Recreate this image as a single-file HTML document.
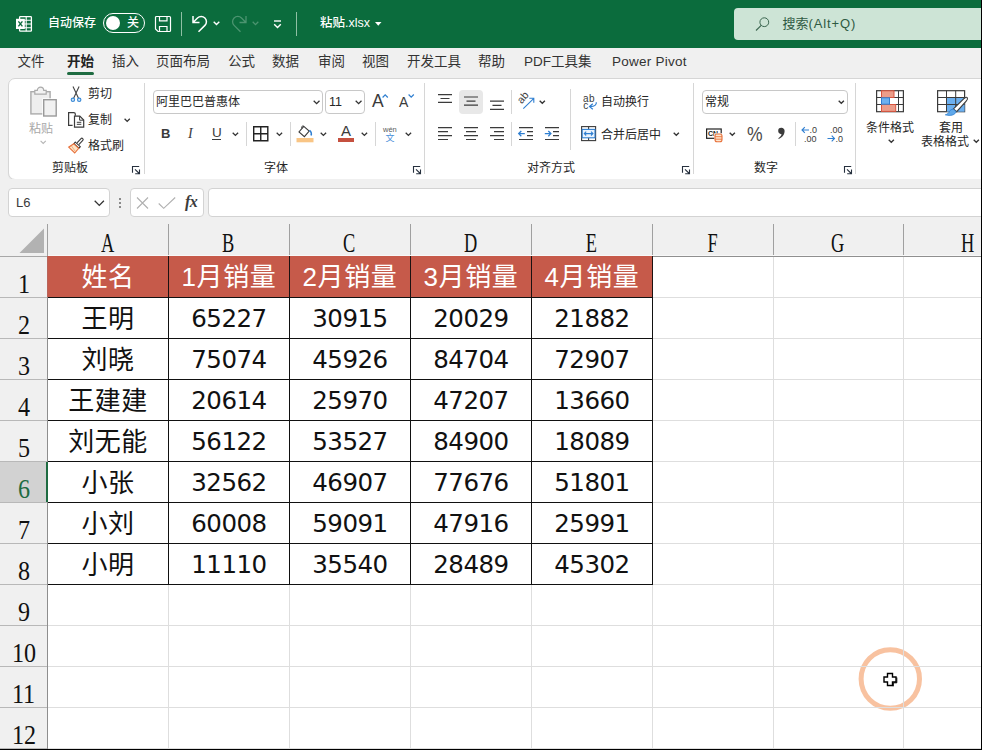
<!DOCTYPE html>
<html lang="zh-CN">
<head>
<meta charset="utf-8">
<title>粘贴.xlsx</title>
<style>
html,body{margin:0;padding:0;}
body{width:982px;height:750px;overflow:hidden;position:relative;background:#f0f0f0;font-family:"Liberation Sans","Noto Sans CJK SC",sans-serif;color:#222;}
.abs{position:absolute;}
svg{overflow:visible;}
#title{left:0;top:0;width:982px;height:48px;background:#0b6c3d;}
#title .t{position:absolute;color:#fff;font-weight:500;font-size:12px;line-height:16px;white-space:nowrap;}
#search{left:734px;top:8px;width:260px;height:32px;border-radius:4px;background:#cde4d6;}
#search .st{position:absolute;left:48.5px;top:8px;font-size:13px;line-height:16px;color:#2f5a43;white-space:nowrap;}
#menu{left:0;top:48px;width:982px;height:30px;background:#f0f0f0;}
#menu span{position:absolute;top:6px;font-size:13.5px;line-height:16px;color:#333;white-space:nowrap;}
#ribbon{left:8px;top:78px;width:990px;height:102px;background:#fff;border:1px solid #d6d6d6;border-radius:7px;box-sizing:border-box;box-shadow:0 1px 1px rgba(0,0,0,0.05);}
.rt{position:absolute;font-weight:400;font-size:12px;line-height:14px;color:#262626;white-space:nowrap;}
.sep{position:absolute;width:1px;background:#d6d6d6;}
.box{position:absolute;box-sizing:border-box;border:1px solid #c8c8c8;border-radius:4px;background:#fff;}
#fbar{left:0;top:179px;width:982px;height:44px;background:#f0f0f0;}
#grid{left:0;top:222px;width:982px;height:528px;background:#f0f0f0;overflow:hidden;}
#grid .vl{position:absolute;width:1px;background:#dedede;}
#grid .hl{position:absolute;height:1px;background:#dedede;}
#grid .hv{position:absolute;width:1px;background:#a0a0a0;}
#grid .cl{position:absolute;top:5px;height:32px;line-height:32px;text-align:center;font-family:"Liberation Serif","Noto Serif CJK SC",serif;font-size:27px;color:#111;}
#grid .cl span{display:inline-block;transform:scaleX(0.68);}
#grid .rn{position:absolute;left:0;width:47px;height:40px;line-height:54px;text-align:center;font-family:"Liberation Serif","Noto Serif CJK SC",serif;font-size:28px;color:#111;}
#grid .rn span{display:inline-block;transform:scaleX(0.86);}
#grid .rn.sel{color:#1e6b41;}
#grid .hc{position:absolute;background:#c65a4a;color:#fff;text-align:center;font-size:26px;line-height:43px;letter-spacing:0.6px;white-space:nowrap;}
#grid .dc{position:absolute;height:40px;line-height:41px;text-align:center;color:#111;white-space:nowrap;}
#grid .cj{font-size:26px;letter-spacing:0.5px;line-height:43px;}
#grid .nm{font-family:"DejaVu Sans","Liberation Sans",sans-serif;font-size:24.5px;letter-spacing:-0.5px;}
</style>
</head>
<body>
<div id="title" class="abs">
<svg class="abs" style="left:15px;top:15px" width="18" height="18" viewBox="0 0 18 18"><rect x="4.600" y="1.600" width="11.800" height="14.600" rx="0.800" fill="none" stroke="#fff" stroke-width="1.300"/><path d="M4.600 5.300h11.800M4.600 9h11.800M4.600 12.700h11.800M11.200 1.600v14.600" stroke="#fff" stroke-width="1.100" fill="none"/><rect x="1" y="3.800" width="8.800" height="10.200" fill="#fff"/><path d="M3.400 6.400l4 5M7.400 6.400l-4 5" stroke="#0b6c3d" stroke-width="1.400" fill="none"/></svg>
<div class="t" style="left:48px;top:15px;">自动保存</div>
<div class="abs" style="left:103px;top:13px;width:42px;height:20px;box-sizing:border-box;border:1px solid #fff;border-radius:10px;"></div>
<div class="abs" style="left:106px;top:16px;width:14px;height:14px;border-radius:7px;background:#fff;"></div>
<div class="t" style="left:127px;top:15px;">关</div>
<svg class="abs" style="left:154px;top:15px" width="18" height="18" viewBox="0 0 18 18"><path d="M1.500 2.500a1 1 0 0 1 1-1h13a1 1 0 0 1 1 1v13a1 1 0 0 1-1 1h-11.500l-2.500-2.500z" fill="none" stroke="#fff" stroke-width="1.200"/><path d="M5.500 1.500v4.300h7.500v-4.300M5.500 16.500v-5h7.500v5" fill="none" stroke="#fff" stroke-width="1.200"/></svg>
<div class="abs" style="left:181px;top:12px;width:1px;height:24px;background:#8fc0a4;"></div>
<svg class="abs" style="left:192px;top:14px" width="16" height="19" viewBox="0 0 16 19"><path d="M1 2v6.500h6.500M1.300 8.200l4.200-4.200a5.200 5.200 0 0 1 7.400 7.400l-6.400 6.400" fill="none" stroke="#fff" stroke-width="1.500"/></svg>
<svg class="abs" style="left:213px;top:21px" width="7" height="5" viewBox="0 0 7 5"><path d="M0.700 0.800l2.800 2.800 2.800-2.800" fill="none" stroke="#fff" stroke-width="1.400"/></svg>
<svg class="abs" style="left:231px;top:14px" width="16" height="19" viewBox="0 0 16 19"><path d="M15 2v6.500h-6.500M14.700 8.200l-4.200-4.200a5.200 5.200 0 0 0-7.400 7.400l6.400 6.400" fill="none" stroke="#4c9470" stroke-width="1.300"/></svg>
<svg class="abs" style="left:252px;top:21px" width="7" height="5" viewBox="0 0 7 5"><path d="M0.700 0.800l2.800 2.800 2.800-2.800" fill="none" stroke="#4c9470" stroke-width="1.300"/></svg>
<svg class="abs" style="left:273px;top:19px" width="9" height="10" viewBox="0 0 9 10"><path d="M1 2h7" stroke="#fff" stroke-width="1.400"/><path d="M1.200 5.200l3.300 3.300 3.300-3.300" fill="none" stroke="#fff" stroke-width="1.400"/></svg>
<div class="abs" style="left:296px;top:12px;width:1px;height:24px;background:#8fc0a4;"></div>
<div class="t" style="left:320px;top:15px;font-size:12.500px;">粘贴.xlsx</div>
<svg class="abs" style="left:375px;top:22px" width="7" height="4" viewBox="0 0 7 4"><path d="M0 0h6.500l-3.250 3.800z" fill="#fff"/></svg>
<div id="search" class="abs"><svg class="abs" style="left:21px;top:9px" width="15" height="15" viewBox="0 0 15 15"><circle cx="9.300" cy="5.200" r="4.400" fill="none" stroke="#3b6650" stroke-width="1"/><path d="M6.200 8.300l-5.200 5.200" stroke="#3b6650" stroke-width="1.100"/></svg><div class="st">搜索<span style="letter-spacing:0.900px">(Alt+Q)</span></div></div>

</div>
<div id="menu" class="abs">
<span style="left:17.500px">文件</span><span style="left:67px;font-weight:bold;color:#222">开始</span><span style="left:112px">插入</span><span style="left:156px">页面布局</span><span style="left:228px">公式</span><span style="left:272px">数据</span><span style="left:318px">审阅</span><span style="left:362px">视图</span><span style="left:407px">开发工具</span><span style="left:478px">帮助</span><span style="left:524px">PDF工具集</span><span style="left:612px;letter-spacing:0.250px">Power Pivot</span>
<div class="abs" style="left:67px;top:24px;width:27px;height:3px;border-radius:1.500px;background:#1e6b41"></div>

</div>
<div id="ribbon" class="abs">
<!-- coordinates inside ribbon are relative to (9,78) minus border; use wrapper offset -->
<div class="abs" id="rb" style="left:-9px;top:-79px;width:982px;height:190px;">
<!-- clipboard group -->
<svg class="abs" style="left:29px;top:86px" width="29" height="32" viewBox="0 0 29 32"><rect x="1.900" y="5.700" width="19.200" height="22.200" fill="#eeeeee" stroke="#ababab" stroke-width="1.400"/><path d="M5.800 8.200v-3.800h2.500a3.200 3.200 0 0 1 6.400 0h2.500v3.800z" fill="#f2f2f2" stroke="#ababab" stroke-width="1.200"/><rect x="13.300" y="12.300" width="15.200" height="19" fill="#fff"/><rect x="14.700" y="13.700" width="12.500" height="16.300" fill="#f1f1f1" stroke="#9a9a9a" stroke-width="1.400"/></svg>
<div class="rt" style="left:29px;top:121.500px;color:#a8a8a8;font-weight:400;">粘贴</div>
<svg class="abs" style="left:40px;top:140px" width="7" height="5" viewBox="0 0 7 5"><path d="M0.600 0.800l2.600 2.600 2.600-2.600" fill="none" stroke="#b5b5b5" stroke-width="1.100"/></svg>
<svg class="abs" style="left:70px;top:86px" width="12" height="17" viewBox="0 0 12 17"><path d="M3 0.500l5.500 11.700M9.100 0.500l-5.500 11.700" stroke="#444" stroke-width="1.100" fill="none"/><circle cx="2.900" cy="13.800" r="1.700" fill="#cfe4f7" stroke="#3a8ad6" stroke-width="1.100"/><circle cx="9.200" cy="13.800" r="1.700" fill="#cfe4f7" stroke="#3a8ad6" stroke-width="1.100"/></svg>
<div class="rt" style="left:88px;top:87px;">剪切</div>
<svg class="abs" style="left:68px;top:112px" width="17" height="16" viewBox="0 0 17 16"><path d="M4.600 13.300h-4v-12.700h5.200q1.500 0 1.500 1.500v1.700" fill="none" stroke="#3b3b3b" stroke-width="1.200"/><path d="M6.500 4.100h5.300l3.900 3.900v7.200h-9.200z" fill="#fff" stroke="#3b3b3b" stroke-width="1.200"/><path d="M11.600 4.300v3.900h3.900" fill="none" stroke="#3b3b3b" stroke-width="1"/><path d="M8.800 10.300h4.500M8.800 12.300h4.500" stroke="#3b3b3b" stroke-width="1"/></svg>
<div class="rt" style="left:88px;top:113px;">复制</div>
<svg class="abs" style="left:124px;top:118px" width="7" height="5" viewBox="0 0 7 5"><path d="M0.600 0.800l2.600 2.600 2.600-2.600" fill="none" stroke="#333" stroke-width="1.300"/></svg>
<svg class="abs" style="left:68px;top:138px" width="17" height="16" viewBox="0 0 17 16"><path d="M10.800 6.600l4-4.300a1.200 1.200 0 0 0-1.800-1.700l-4 4.300" fill="#fff" stroke="#3b3b3b" stroke-width="1.100"/><path d="M7.300 4.100l5 4.600-1.400 1.500-5-4.600z" fill="#fff" stroke="#3b3b3b" stroke-width="1.100"/><path d="M5.800 5.800l4.900 4.500-4 4.700-6-5.800z" fill="#fde6c8" stroke="#e8703a" stroke-width="1.100"/><path d="M3.500 8l3.500 5" stroke="#f0a070" stroke-width="0.800" fill="none"/></svg>
<div class="rt" style="left:88px;top:139px;">格式刷</div>
<div class="rt" style="left:52px;top:161px;">剪贴板</div>
<svg class="abs lau" style="left:132px;top:166px" width="9" height="9" viewBox="0 0 9 9"><path d="M0.500 6.800v-6.300h6.700" fill="none" stroke="#26303e" stroke-width="1.100"/><path d="M3 3.400l4.300 4.100M7.500 3.400v4.300h-4.300" fill="none" stroke="#26303e" stroke-width="1.100"/></svg>
<div class="sep" style="left:144px;top:83px;height:91px;"></div>
<!-- font group -->
<div class="box" style="left:153px;top:90px;width:170px;height:24px;"></div>
<div class="rt" style="left:156px;top:95px;">阿里巴巴普惠体</div>
<svg class="abs" style="left:313px;top:100px" width="8" height="5" viewBox="0 0 8 5"><path d="M0.700 0.700l2.900 2.900 2.900-2.900" fill="none" stroke="#333" stroke-width="1.300"/></svg>
<div class="box" style="left:325px;top:90px;width:40px;height:24px;"></div>
<div class="rt" style="left:329px;top:95px;font-weight:400;font-size:12.500px;">11</div>
<svg class="abs" style="left:355px;top:100px" width="8" height="5" viewBox="0 0 8 5"><path d="M0.700 0.700l2.900 2.900 2.900-2.900" fill="none" stroke="#333" stroke-width="1.300"/></svg>
<div class="rt" style="left:372px;top:92px;font-size:17.500px;line-height:18px;color:#3b3b3b;font-weight:400;">A</div>
<svg class="abs" style="left:382px;top:94px" width="7" height="4" viewBox="0 0 7 4"><path d="M0.600 3.500l2.600-2.700 2.600 2.700" fill="none" stroke="#2f7fd1" stroke-width="1.200"/></svg>
<div class="rt" style="left:399px;top:95px;font-size:14px;line-height:14px;color:#3b3b3b;font-weight:400;">A</div>
<svg class="abs" style="left:408px;top:94px" width="7" height="4" viewBox="0 0 7 4"><path d="M0.600 0.500l2.600 2.700 2.600-2.700" fill="none" stroke="#2f7fd1" stroke-width="1.200"/></svg>
<div class="rt" style="left:161px;top:125.500px;font-size:13px;line-height:16px;font-weight:bold;color:#3b3b3b;">B</div>
<div class="rt" style="left:188px;top:126px;font-size:14px;line-height:16px;font-style:italic;font-family:'Liberation Serif',serif;color:#3b3b3b;">I</div>
<div class="rt" style="left:212px;top:125px;font-size:13.500px;line-height:16px;color:#3b3b3b;font-weight:400;">U</div>
<div class="abs" style="left:212px;top:139px;width:9px;height:1px;background:#3b3b3b;"></div>
<svg class="abs" style="left:232px;top:132px" width="8" height="5" viewBox="0 0 8 5"><path d="M0.700 0.700l2.700 2.700 2.700-2.700" fill="none" stroke="#333" stroke-width="1.300"/></svg>
<div class="sep" style="left:246px;top:122px;height:24px;"></div>
<svg class="abs" style="left:253px;top:126px" width="16" height="16" viewBox="0 0 16 16"><path d="M0.700 0.700h14.100v14.100h-14.100zM7.750 0.700v14.100M0.700 7.750h14.100" fill="none" stroke="#222" stroke-width="1.400"/></svg>
<svg class="abs" style="left:276px;top:132px" width="8" height="5" viewBox="0 0 8 5"><path d="M0.700 0.700l2.700 2.700 2.700-2.700" fill="none" stroke="#333" stroke-width="1.300"/></svg>
<div class="sep" style="left:290px;top:122px;height:24px;"></div>
<svg class="abs" style="left:296px;top:125px" width="19" height="18" viewBox="0 0 19 18"><path d="M7.800 1.300l5.400 4.700-4.800 5.600-5.400-4.700z" fill="#fff" stroke="#3b3b3b" stroke-width="1.100"/><path d="M7.800 1.300c-1.500-1-3 0.800-1.800 2" fill="none" stroke="#3b3b3b" stroke-width="1"/><path d="M13.500 5.200q2.600 2.200 1.600 5.300" fill="none" stroke="#2f7fd1" stroke-width="1.500"/><rect x="0.500" y="13" width="17" height="4.300" fill="#f9c585"/></svg>
<svg class="abs" style="left:320px;top:132px" width="8" height="5" viewBox="0 0 8 5"><path d="M0.700 0.700l2.700 2.700 2.700-2.700" fill="none" stroke="#333" stroke-width="1.300"/></svg>
<div class="rt" style="left:341px;top:123px;font-size:15px;line-height:16px;color:#3b3b3b;font-weight:400;">A</div>
<div class="abs" style="left:338px;top:138px;width:16px;height:4px;background:#c5503f;"></div>
<svg class="abs" style="left:361px;top:132px" width="8" height="5" viewBox="0 0 8 5"><path d="M0.700 0.700l2.700 2.700 2.700-2.700" fill="none" stroke="#333" stroke-width="1.300"/></svg>
<div class="sep" style="left:375px;top:122px;height:24px;"></div>
<div class="rt" style="left:383px;top:125px;font-size:7.500px;line-height:9px;color:#5a5a5a;font-weight:400;">wén</div>
<div class="rt" style="left:385.500px;top:133px;font-size:9px;line-height:11px;color:#4a90d9;font-weight:400;">文</div>
<svg class="abs" style="left:405px;top:132px" width="8" height="5" viewBox="0 0 8 5"><path d="M0.700 0.700l2.700 2.700 2.700-2.700" fill="none" stroke="#333" stroke-width="1.300"/></svg>
<div class="rt" style="left:264px;top:161px;">字体</div>
<svg class="abs lau" style="left:413px;top:166px" width="9" height="9" viewBox="0 0 9 9"><path d="M0.500 6.800v-6.300h6.700" fill="none" stroke="#26303e" stroke-width="1.100"/><path d="M3 3.400l4.300 4.100M7.500 3.400v4.300h-4.300" fill="none" stroke="#26303e" stroke-width="1.100"/></svg>
<div class="sep" style="left:424px;top:83px;height:91px;"></div>
<!-- alignment group -->
<svg class="abs" style="left:437px;top:93px" width="16" height="11" viewBox="0 0 16 11"><path d="M1 1.700h14M3.500 5.500h9M1 9.300h14" stroke="#3b3b3b" stroke-width="1.200" fill="none"/></svg>
<div class="abs" style="left:459px;top:90px;width:24px;height:24px;border-radius:4px;background:#e8e8e8;"></div>
<svg class="abs" style="left:463px;top:95px" width="16" height="12" viewBox="0 0 16 12"><path d="M1 2h14M3.500 6.100h9M1 10.200h14" stroke="#3b3b3b" stroke-width="1.200" fill="none"/></svg>
<svg class="abs" style="left:489px;top:99px" width="16" height="12" viewBox="0 0 16 12"><path d="M1 2.200h14M3.500 6.300h9M1 10.300h14" stroke="#3b3b3b" stroke-width="1.200" fill="none"/></svg>
<div class="sep" style="left:511px;top:90px;height:24px;"></div>
<svg class="abs" style="left:517px;top:92px" width="18" height="18" viewBox="0 0 18 18"><path d="M6.300 16.600l10.300-10M12.300 6.300h4.500v4.500" fill="none" stroke="#2f7fd1" stroke-width="1.100"/><text x="0" y="0" transform="translate(4.800,12.300) rotate(-50)" font-family="Liberation Sans, sans-serif" font-size="10.500" fill="#3b3b3b">ab</text></svg>
<svg class="abs" style="left:539px;top:100px" width="8" height="5" viewBox="0 0 8 5"><path d="M0.700 0.700l2.600 2.600 2.600-2.600" fill="none" stroke="#333" stroke-width="1.300"/></svg>
<svg class="abs" style="left:437px;top:126px" width="16" height="15" viewBox="0 0 16 15"><path d="M1 1.600h14M1 5.600h10M1 9.700h14M1 13.500h10" stroke="#3b3b3b" stroke-width="1.200" fill="none"/></svg>
<svg class="abs" style="left:463px;top:126px" width="16" height="15" viewBox="0 0 16 15"><path d="M1 1.600h14M3 5.600h10M1 9.700h14M3 13.500h10" stroke="#3b3b3b" stroke-width="1.200" fill="none"/></svg>
<svg class="abs" style="left:489px;top:126px" width="16" height="15" viewBox="0 0 16 15"><path d="M1 1.600h14M5 5.600h10M1 9.700h14M5 13.500h10" stroke="#3b3b3b" stroke-width="1.200" fill="none"/></svg>
<div class="sep" style="left:511px;top:122px;height:24px;"></div>
<svg class="abs" style="left:518px;top:126px" width="16" height="15" viewBox="0 0 16 15"><path d="M1 1.600h14M9 5.600h6M9 9.700h6M1 13.500h14" stroke="#3b3b3b" stroke-width="1.200" fill="none"/><path d="M0.800 7.600h6M3.300 5l-2.600 2.600 2.600 2.600" stroke="#2f7fd1" stroke-width="1.300" fill="none"/></svg>
<svg class="abs" style="left:544px;top:126px" width="16" height="15" viewBox="0 0 16 15"><path d="M1 1.600h14M9 5.600h6M9 9.700h6M1 13.500h14" stroke="#3b3b3b" stroke-width="1.200" fill="none"/><path d="M0.800 7.600h6M4.300 5l2.600 2.600-2.600 2.600" stroke="#2f7fd1" stroke-width="1.300" fill="none"/></svg>
<div class="sep" style="left:570px;top:89px;height:61px;"></div>
<svg class="abs" style="left:583px;top:94px" width="16" height="17" viewBox="0 0 16 17"><text x="0" y="8.300" font-family="Liberation Sans, sans-serif" font-size="10" letter-spacing="0.400" fill="#3b3b3b">ab</text><text x="0.300" y="15.300" font-family="Liberation Sans, sans-serif" font-size="10" fill="#3b3b3b">c</text><path d="M13.300 8.300q0.500 4-6 4.300M9.800 9.800l-3.300 2.800 3.300 2.600" fill="none" stroke="#2f7fd1" stroke-width="1.200"/></svg>
<div class="rt" style="left:601px;top:95px;">自动换行</div>
<svg class="abs" style="left:581px;top:126px" width="16" height="16" viewBox="0 0 16 16"><rect x="0.600" y="0.600" width="14" height="14" fill="#fff" stroke="#3b3b3b" stroke-width="1.100"/><path d="M7.600 0.600v2.800M7.600 11.800v2.800" stroke="#3b3b3b" stroke-width="1.100"/><rect x="1.200" y="3.400" width="12.800" height="8.400" fill="#eaf3fd" stroke="#2f7fd1" stroke-width="1.100"/><path d="M3.300 7.600h8.600M5.200 5.700l-1.900 1.900 1.900 1.900M10 5.700l1.900 1.900-1.900 1.900" fill="none" stroke="#2f7fd1" stroke-width="1.100"/></svg>
<div class="rt" style="left:601px;top:128px;">合并后居中</div>
<svg class="abs" style="left:673px;top:132px" width="8" height="5" viewBox="0 0 8 5"><path d="M0.700 0.700l2.600 2.600 2.600-2.600" fill="none" stroke="#333" stroke-width="1.300"/></svg>
<div class="rt" style="left:527px;top:161px;">对齐方式</div>
<svg class="abs lau" style="left:682px;top:166px" width="9" height="9" viewBox="0 0 9 9"><path d="M0.500 6.800v-6.300h6.700" fill="none" stroke="#26303e" stroke-width="1.100"/><path d="M3 3.400l4.300 4.100M7.500 3.400v4.300h-4.300" fill="none" stroke="#26303e" stroke-width="1.100"/></svg>
<div class="sep" style="left:693px;top:83px;height:91px;"></div>
<!-- number group -->
<div class="box" style="left:702px;top:90px;width:146px;height:24px;"></div>
<div class="rt" style="left:705px;top:95px;">常规</div>
<svg class="abs" style="left:838px;top:100px" width="8" height="5" viewBox="0 0 8 5"><path d="M0.700 0.700l2.600 2.600 2.600-2.600" fill="none" stroke="#333" stroke-width="1.300"/></svg>
<svg class="abs" style="left:706px;top:128px" width="17" height="15" viewBox="0 0 17 15"><rect x="0.600" y="1" width="14.600" height="9.300" fill="#fff" stroke="#222" stroke-width="1.200"/><text x="2" y="8.200" font-family="Liberation Sans, sans-serif" font-size="7" font-weight="bold" fill="#222">CN</text><rect x="8.300" y="5.300" width="8.200" height="9" fill="#fff"/><rect x="9" y="6" width="7" height="7.800" rx="2" fill="#fde7cf" stroke="#e8703a" stroke-width="1.100"/><path d="M9 8.700h7M9 11.200h7" stroke="#e8703a" stroke-width="0.900"/></svg>
<svg class="abs" style="left:729px;top:132px" width="8" height="5" viewBox="0 0 8 5"><path d="M0.700 0.700l2.600 2.600 2.600-2.600" fill="none" stroke="#333" stroke-width="1.300"/></svg>
<div class="rt" style="left:746.500px;top:124px;font-size:19.500px;line-height:20px;color:#4a4a4a;font-weight:400;transform:scaleX(0.900);transform-origin:0 0;">%</div>
<svg class="abs" style="left:777px;top:127px" width="9" height="13" viewBox="0 0 9 13"><path d="M4.300 0.800a3.100 3.100 0 0 1 3.300 3.300c0 3.500-2.300 6.500-5.800 8l-0.500-0.900c1.900-1 3.100-2.400 3.300-4.100a3 3 0 0 1-3.400-3.100a3.100 3.100 0 0 1 3.100-3.200z" fill="#3b3b3b"/></svg>
<div class="sep" style="left:795px;top:122px;height:24px;"></div>
<svg class="abs" style="left:801px;top:125px" width="18" height="18" viewBox="0 0 18 18"><path d="M1 5h7M3.800 2.200l-2.800 2.800 2.800 2.800" fill="none" stroke="#2f7fd1" stroke-width="1.100"/><text x="8.500" y="8" font-family="Liberation Sans, sans-serif" font-size="9" fill="#3b3b3b">.0</text><text x="3" y="16.500" font-family="Liberation Sans, sans-serif" font-size="9" fill="#3b3b3b">.00</text></svg>
<svg class="abs" style="left:827px;top:125px" width="18" height="18" viewBox="0 0 18 18"><text x="3" y="8" font-family="Liberation Sans, sans-serif" font-size="9" fill="#3b3b3b">.00</text><path d="M0.500 13.500h7M4.700 10.700l2.800 2.800-2.800 2.800" fill="none" stroke="#2f7fd1" stroke-width="1.100"/><text x="8.500" y="16.500" font-family="Liberation Sans, sans-serif" font-size="9" fill="#3b3b3b">.0</text></svg>
<div class="rt" style="left:754px;top:161px;">数字</div>
<svg class="abs lau" style="left:844px;top:166px" width="9" height="9" viewBox="0 0 9 9"><path d="M0.500 6.800v-6.300h6.700" fill="none" stroke="#26303e" stroke-width="1.100"/><path d="M3 3.400l4.300 4.100M7.500 3.400v4.300h-4.300" fill="none" stroke="#26303e" stroke-width="1.100"/></svg>
<div class="sep" style="left:855px;top:83px;height:91px;"></div>
<!-- styles group -->
<svg class="abs" style="left:876px;top:90px" width="28" height="23" viewBox="0 0 28 23"><rect x="0.600" y="0.700" width="26.800" height="21" fill="#fff" stroke="#3b3b3b" stroke-width="1.200"/><path d="M5.500 0.700v21M22.500 0.700v21M0.600 7.500h26.800M0.600 14.500h26.800" stroke="#3b3b3b" stroke-width="1" fill="none"/><rect x="5.500" y="0.800" width="12.500" height="6.700" fill="#eb9d8a" stroke="#d9553f" stroke-width="1"/><rect x="5.500" y="14.500" width="14.200" height="6.900" fill="#eb9d8a" stroke="#d9553f" stroke-width="1"/><rect x="5.500" y="7.800" width="8" height="6.400" fill="#6cb0f0" stroke="#2f7fd1" stroke-width="1"/></svg>
<div class="rt" style="left:866px;top:121px;">条件格式</div>
<svg class="abs" style="left:888px;top:139px" width="8" height="5" viewBox="0 0 8 5"><path d="M0.700 0.700l2.600 2.600 2.600-2.600" fill="none" stroke="#333" stroke-width="1.300"/></svg>
<svg class="abs" style="left:937px;top:90px" width="31" height="28" viewBox="0 0 31 28"><rect x="0.600" y="0.700" width="27" height="21" fill="#fff" stroke="#3b3b3b" stroke-width="1.200"/><rect x="9.500" y="7.500" width="18.100" height="14.200" fill="#6cb0f0"/><path d="M9.500 0.700v21M18.700 0.700v21M0.600 7.500h27M0.600 14.500h27" stroke="#3b3b3b" stroke-width="1" fill="none"/><path d="M30.200 7.600c0.800 1.100 0 2.400-0.800 3.300l-9.700 10.800-3.300-2.800 10.500-10.200c1-1 2.500-2 3.300-1.100z" fill="#fff" stroke="#3b3b3b" stroke-width="1.100"/><path d="M16.400 19.200l2.700 2.300c-0.800 3.500-5.500 4.800-10.800 3.300c2.200-0.600 3.300-1.600 4-3c0.800-1.700 2-2.600 4.100-2.600z" fill="#5fa8ea" stroke="#2f7fd1" stroke-width="0.800"/></svg>
<div class="rt" style="left:939px;top:121px;">套用</div>
<div class="rt" style="left:921px;top:135px;">表格格式</div>
<svg class="abs" style="left:973px;top:139px" width="8" height="5" viewBox="0 0 8 5"><path d="M0.700 0.700l2.600 2.600 2.600-2.600" fill="none" stroke="#333" stroke-width="1.300"/></svg>

</div>

</div>
<div id="fbar" class="abs">
<div class="abs" id="fb" style="left:0;top:-179px;width:982px;height:230px;">
<div class="box" style="left:8px;top:188px;width:102px;height:29px;border-color:#d3d3d3;"></div>
<div class="rt" style="left:16px;top:195px;font-size:13px;line-height:16px;color:#3b3b3b;">L6</div>
<svg class="abs" style="left:94px;top:200px" width="11" height="7" viewBox="0 0 11 7"><path d="M0.700 0.800l4.600 4.600 4.600-4.600" fill="none" stroke="#333" stroke-width="1.300"/></svg>
<div class="abs" style="left:119px;top:198px;width:2px;height:2px;background:#8a8a8a;box-shadow:0 4px 0 #8a8a8a,0 8px 0 #8a8a8a;"></div>
<div class="box" style="left:130px;top:188px;width:74px;height:29px;border-color:#d3d3d3;"></div>
<svg class="abs" style="left:136px;top:197px" width="13" height="12" viewBox="0 0 13 12"><path d="M1 0.500l11 11M12 0.500l-11 11" stroke="#b0b0b0" stroke-width="1.100" fill="none"/></svg>
<svg class="abs" style="left:158px;top:197px" width="18" height="12" viewBox="0 0 18 12"><path d="M0.700 6.500l5 4.800l11.500-10.800" stroke="#b0b0b0" stroke-width="1.100" fill="none"/></svg>
<div class="rt" style="left:185px;top:193px;font-family:'Liberation Serif',serif;font-style:italic;font-weight:bold;font-size:16px;line-height:18px;color:#3b3b3b;letter-spacing:-0.500px;">fx</div>
<div class="box" style="left:208px;top:188px;width:800px;height:29px;border-color:#d3d3d3;"></div>
</div>

</div>
<div id="grid" class="abs">
<div class="abs" style="left:48px;top:34px;width:934px;height:494px;background:#fff"></div>
<svg class="abs" style="left:856px;top:423px" width="70" height="70" viewBox="0 0 70 70"><circle cx="34.300" cy="34" r="29.200" fill="none" stroke="#f8c2a0" stroke-width="5"/></svg>
<div class="vl" style="left:168px;top:35px;height:493px"></div>
<div class="vl" style="left:289px;top:35px;height:493px"></div>
<div class="vl" style="left:410px;top:35px;height:493px"></div>
<div class="vl" style="left:531px;top:35px;height:493px"></div>
<div class="vl" style="left:652px;top:35px;height:493px"></div>
<div class="vl" style="left:773px;top:35px;height:493px"></div>
<div class="vl" style="left:903px;top:35px;height:493px"></div>
<div class="hl" style="left:48px;top:75px;width:934px"></div>
<div class="hl" style="left:48px;top:116px;width:934px"></div>
<div class="hl" style="left:48px;top:157px;width:934px"></div>
<div class="hl" style="left:48px;top:198px;width:934px"></div>
<div class="hl" style="left:48px;top:239px;width:934px"></div>
<div class="hl" style="left:48px;top:280px;width:934px"></div>
<div class="hl" style="left:48px;top:321px;width:934px"></div>
<div class="hl" style="left:48px;top:362px;width:934px"></div>
<div class="hl" style="left:48px;top:403px;width:934px"></div>
<div class="hl" style="left:48px;top:444px;width:934px"></div>
<div class="hl" style="left:48px;top:485px;width:934px"></div>
<div class="hl" style="left:48px;top:526px;width:934px"></div>
<div class="hv" style="left:47px;top:2px;height:33px"></div>
<div class="hv" style="left:168px;top:2px;height:33px"></div>
<div class="hv" style="left:289px;top:2px;height:33px"></div>
<div class="hv" style="left:410px;top:2px;height:33px"></div>
<div class="hv" style="left:531px;top:2px;height:33px"></div>
<div class="hv" style="left:652px;top:2px;height:33px"></div>
<div class="hv" style="left:773px;top:2px;height:33px"></div>
<div class="hv" style="left:903px;top:2px;height:33px"></div>
<div class="abs" style="left:0;top:34px;width:48px;height:1px;background:#a8a8a8"></div>
<div class="abs" style="left:48px;top:34px;width:934px;height:1px;background:#8f8f8f"></div>
<div class="abs" style="left:48px;top:33px;width:934px;height:1px;background:#f8f8f8"></div>
<div class="abs" style="left:0;top:75px;width:47px;height:1px;background:#b8b8b8"></div>
<div class="abs" style="left:0;top:116px;width:47px;height:1px;background:#b8b8b8"></div>
<div class="abs" style="left:0;top:157px;width:47px;height:1px;background:#b8b8b8"></div>
<div class="abs" style="left:0;top:198px;width:47px;height:1px;background:#b8b8b8"></div>
<div class="abs" style="left:0;top:239px;width:47px;height:1px;background:#b8b8b8"></div>
<div class="abs" style="left:0;top:280px;width:47px;height:1px;background:#b8b8b8"></div>
<div class="abs" style="left:0;top:321px;width:47px;height:1px;background:#b8b8b8"></div>
<div class="abs" style="left:0;top:362px;width:47px;height:1px;background:#b8b8b8"></div>
<div class="abs" style="left:0;top:403px;width:47px;height:1px;background:#b8b8b8"></div>
<div class="abs" style="left:0;top:444px;width:47px;height:1px;background:#b8b8b8"></div>
<div class="abs" style="left:0;top:485px;width:47px;height:1px;background:#b8b8b8"></div>
<div class="abs" style="left:0;top:526px;width:47px;height:1px;background:#b8b8b8"></div>
<div class="abs" style="left:47px;top:35px;width:1px;height:493px;background:#8e8e8e"></div>
<div class="abs" style="left:0;top:240px;width:46px;height:40px;background:#d2d2d2"></div>
<svg class="abs" style="left:19px;top:6px" width="26" height="26" viewBox="0 0 26 26"><polygon points="25,0.500 25,25 0.500,25" fill="#b2b2b2"/></svg>
<div class="cl" style="left:47px;width:121px"><span>A</span></div>
<div class="cl" style="left:168px;width:121px"><span>B</span></div>
<div class="cl" style="left:289px;width:121px"><span>C</span></div>
<div class="cl" style="left:410px;width:121px"><span>D</span></div>
<div class="cl" style="left:531px;width:121px"><span>E</span></div>
<div class="cl" style="left:652px;width:121px"><span>F</span></div>
<div class="cl" style="left:773px;width:130px"><span>G</span></div>
<div class="cl" style="left:903px;width:130px"><span>H</span></div>
<div class="rn" style="top:35px"><span>1</span></div>
<div class="rn" style="top:76px"><span>2</span></div>
<div class="rn" style="top:117px"><span>3</span></div>
<div class="rn" style="top:158px"><span>4</span></div>
<div class="rn" style="top:199px"><span>5</span></div>
<div class="rn sel" style="top:240px"><span>6</span></div>
<div class="rn" style="top:281px"><span>7</span></div>
<div class="rn" style="top:322px"><span>8</span></div>
<div class="rn" style="top:363px"><span>9</span></div>
<div class="rn" style="top:404px"><span>10</span></div>
<div class="rn" style="top:445px"><span>11</span></div>
<div class="rn" style="top:486px"><span>12</span></div>
<div class="hc" style="left:48px;top:34px;width:120px;height:41px"><span>姓名</span></div>
<div class="hc" style="left:169px;top:34px;width:120px;height:41px"><span>1月销量</span></div>
<div class="hc" style="left:290px;top:34px;width:120px;height:41px"><span>2月销量</span></div>
<div class="hc" style="left:411px;top:34px;width:120px;height:41px"><span>3月销量</span></div>
<div class="hc" style="left:532px;top:34px;width:120px;height:41px"><span>4月销量</span></div>
<div class="dc cj" style="left:48px;top:76px;width:120px"><span>王明</span></div>
<div class="dc nm" style="left:169px;top:76px;width:120px"><span>65227</span></div>
<div class="dc nm" style="left:290px;top:76px;width:120px"><span>30915</span></div>
<div class="dc nm" style="left:411px;top:76px;width:120px"><span>20029</span></div>
<div class="dc nm" style="left:532px;top:76px;width:120px"><span>21882</span></div>
<div class="dc cj" style="left:48px;top:117px;width:120px"><span>刘晓</span></div>
<div class="dc nm" style="left:169px;top:117px;width:120px"><span>75074</span></div>
<div class="dc nm" style="left:290px;top:117px;width:120px"><span>45926</span></div>
<div class="dc nm" style="left:411px;top:117px;width:120px"><span>84704</span></div>
<div class="dc nm" style="left:532px;top:117px;width:120px"><span>72907</span></div>
<div class="dc cj" style="left:48px;top:158px;width:120px"><span>王建建</span></div>
<div class="dc nm" style="left:169px;top:158px;width:120px"><span>20614</span></div>
<div class="dc nm" style="left:290px;top:158px;width:120px"><span>25970</span></div>
<div class="dc nm" style="left:411px;top:158px;width:120px"><span>47207</span></div>
<div class="dc nm" style="left:532px;top:158px;width:120px"><span>13660</span></div>
<div class="dc cj" style="left:48px;top:199px;width:120px"><span>刘无能</span></div>
<div class="dc nm" style="left:169px;top:199px;width:120px"><span>56122</span></div>
<div class="dc nm" style="left:290px;top:199px;width:120px"><span>53527</span></div>
<div class="dc nm" style="left:411px;top:199px;width:120px"><span>84900</span></div>
<div class="dc nm" style="left:532px;top:199px;width:120px"><span>18089</span></div>
<div class="dc cj" style="left:48px;top:240px;width:120px"><span>小张</span></div>
<div class="dc nm" style="left:169px;top:240px;width:120px"><span>32562</span></div>
<div class="dc nm" style="left:290px;top:240px;width:120px"><span>46907</span></div>
<div class="dc nm" style="left:411px;top:240px;width:120px"><span>77676</span></div>
<div class="dc nm" style="left:532px;top:240px;width:120px"><span>51801</span></div>
<div class="dc cj" style="left:48px;top:281px;width:120px"><span>小刘</span></div>
<div class="dc nm" style="left:169px;top:281px;width:120px"><span>60008</span></div>
<div class="dc nm" style="left:290px;top:281px;width:120px"><span>59091</span></div>
<div class="dc nm" style="left:411px;top:281px;width:120px"><span>47916</span></div>
<div class="dc nm" style="left:532px;top:281px;width:120px"><span>25991</span></div>
<div class="dc cj" style="left:48px;top:322px;width:120px"><span>小明</span></div>
<div class="dc nm" style="left:169px;top:322px;width:120px"><span>11110</span></div>
<div class="dc nm" style="left:290px;top:322px;width:120px"><span>35540</span></div>
<div class="dc nm" style="left:411px;top:322px;width:120px"><span>28489</span></div>
<div class="dc nm" style="left:532px;top:322px;width:120px"><span>45302</span></div>
<div class="abs" style="left:168px;top:75px;width:1px;height:288px;background:#111"></div>
<div class="abs" style="left:289px;top:75px;width:1px;height:288px;background:#111"></div>
<div class="abs" style="left:410px;top:75px;width:1px;height:288px;background:#111"></div>
<div class="abs" style="left:531px;top:75px;width:1px;height:288px;background:#111"></div>
<div class="abs" style="left:652px;top:75px;width:1px;height:288px;background:#111"></div>
<div class="abs" style="left:48px;top:75px;width:605px;height:1px;background:#111"></div>
<div class="abs" style="left:48px;top:116px;width:605px;height:1px;background:#111"></div>
<div class="abs" style="left:48px;top:157px;width:605px;height:1px;background:#111"></div>
<div class="abs" style="left:48px;top:198px;width:605px;height:1px;background:#111"></div>
<div class="abs" style="left:48px;top:239px;width:605px;height:1px;background:#111"></div>
<div class="abs" style="left:48px;top:280px;width:605px;height:1px;background:#111"></div>
<div class="abs" style="left:48px;top:321px;width:605px;height:1px;background:#111"></div>
<div class="abs" style="left:48px;top:362px;width:605px;height:1px;background:#111"></div>
<div class="abs" style="left:46px;top:240px;width:2px;height:40px;background:#1e6b41"></div>
<div class="abs" style="left:168px;top:34px;width:1px;height:41px;background:#1c1211"></div>
<div class="abs" style="left:289px;top:34px;width:1px;height:41px;background:#1c1211"></div>
<div class="abs" style="left:410px;top:34px;width:1px;height:41px;background:#1c1211"></div>
<div class="abs" style="left:531px;top:34px;width:1px;height:41px;background:#1c1211"></div>
<div class="abs" style="left:652px;top:34px;width:1px;height:41px;background:#1c1211"></div>
<div class="abs" style="left:47px;top:34px;width:1px;height:41px;background:#b8645a"></div>
<svg class="abs" style="left:856px;top:423px" width="70" height="70" viewBox="0 0 70 70"><path d="M31.5 28.5h5v3.500h3.500v5h-3.500v3.500h-5v-3.500h-3.500v-5h3.500z" fill="#fff" stroke="#000" stroke-width="1.400"/><path d="M37.300 41.300v-3.500h3.500v-5.300" fill="none" stroke="#000" stroke-width="1"/></svg>
</div>
<div class="abs" style="left:981px;top:0;width:1px;height:750px;background:#000;z-index:50"></div>
<div class="abs" style="left:0;top:749px;width:982px;height:1px;background:#000;z-index:50"></div>
</body>
</html>
